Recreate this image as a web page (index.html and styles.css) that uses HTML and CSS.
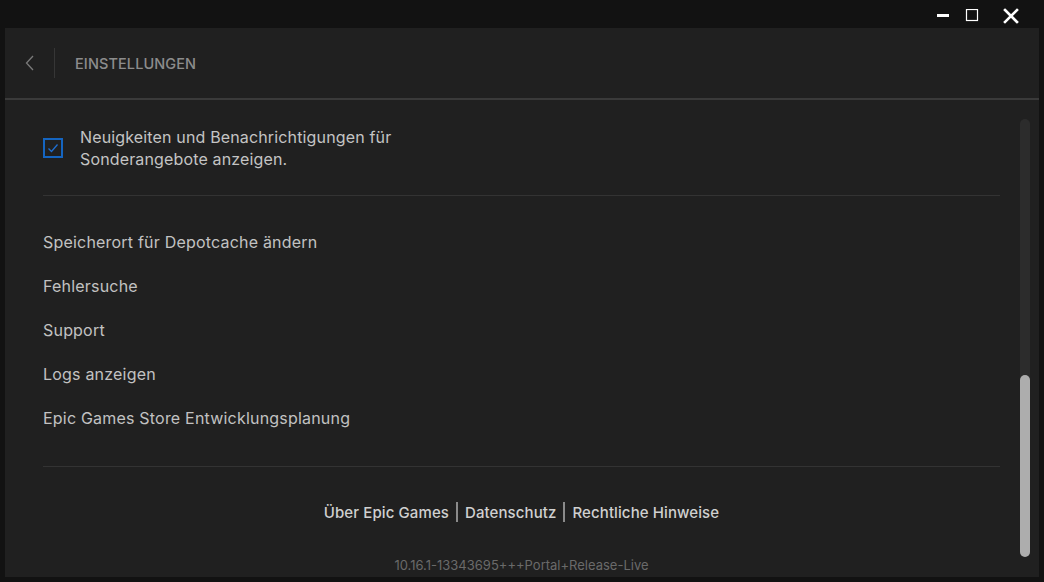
FILE: index.html
```html
<html>
<head>
    <meta charset="utf-8">
    <link rel="stylesheet" href="styles.css">
    <title>Einstellungen</title>
</head>
<body>

<!--title bar-->
<div class="titlebar">
    <span class="win-btn">
        <svg width="14" height="14" viewBox="0 0 14 14"><rect x="1" y="5" width="12" height="3" fill="#fff"/></svg>
    </span>
    <span class="win-btn">
        <svg width="14" height="14" viewBox="0 0 14 14"><rect x="1.5" y="0.5" width="11" height="11" fill="none" stroke="#fff" stroke-width="1.2"/></svg>
    </span>
    <span class="win-btn close">
        <svg width="16" height="16" viewBox="0 0 16 16"><path d="M2 2 L14 14 M14 2 L2 14" stroke="#fff" stroke-width="2.6" stroke-linecap="square"/></svg>
    </span>
</div>

<div class="panel">
    <div class="header">
        <span class="back">
            <svg width="10" height="16" viewBox="0 0 10 16"><path d="M8 1 L1.5 8 L8 15" fill="none" stroke="#7a7a7a" stroke-width="1.3"/></svg>
        </span>
        <span class="header-divider"></span>
        <span class="header-title">EINSTELLUNGEN</span>
    </div>

    <div class="body-row">
        <div class="content">
            <div class="check-row">
                <span class="checkbox">
                    <svg width="14" height="14" viewBox="0 0 14 14"><path d="M2.5 7.5 L5.5 10.5 L11.5 3.5" fill="none" stroke="#1f6fd1" stroke-width="1.3"/></svg>
                </span>
                <span class="check-label">Neuigkeiten und Benachrichtigungen für<br>Sonderangebote anzeigen.</span>
            </div>

            <hr class="sep first-sep">

            <div class="menu-item">Speicherort für Depotcache ändern</div>
            <div class="menu-item">Fehlersuche</div>
            <div class="menu-item">Support</div>
            <div class="menu-item">Logs anzeigen</div>
            <div class="menu-item">Epic Games Store Entwicklungsplanung</div>

            <hr class="sep last-sep">

            <div class="footer-links">
                <span>Über Epic Games</span>
                <span class="bar"></span>
                <span>Datenschutz</span>
                <span class="bar"></span>
                <span>Rechtliche Hinweise</span>
            </div>
            <div class="version">10.16.1-13343695+++Portal+Release-Live</div>
        </div>

        <div class="scroll-track">
            <div class="scroll-thumb"></div>
        </div>
    </div>
</div>

</body>
</html>
```

FILE: styles.css
```css
body {
    margin: 0;
    background-color: #121212;
    font-family: "Inter", "Liberation Sans", sans-serif;
    height: 582px;
    overflow: hidden;
}

/*window buttons*/
.titlebar {
    height: 28px;
    display: flex;
    justify-content: flex-end;
    align-items: center;
    padding-right: 25px;
}

.win-btn {
    display: flex;
    width: 14px;
    height: 14px;
    margin-left: 15px;
    margin-top: 4px;
}

.win-btn.close {
    width: 16px;
    height: 16px;
    margin-left: 24px;
    margin-top: 4px;
}

.panel {
    margin: 0 5px;
    height: 549px;
    background-color: #202020;
    display: flex;
    flex-direction: column;
}

.header {
    border-bottom: 2px solid #3a3a3a;
    display: flex;
    align-items: center;
    box-sizing: border-box;
    height: 72px;
}

.back {
    display: flex;
    margin-left: 20px;
    width: 10px;
}

.header-divider {
    width: 1px;
    height: 30px;
    background-color: #363636;
    margin-left: 19px;
}

.header-title {
    margin-left: 20px;
    font-size: 14.5px;
    font-weight: 500;
    color: #8c8c8c;
    letter-spacing: 0.1px;
}

.body-row {
    display: flex;
    flex: 1;
}

.content {
    width: 957px;
    margin-left: 38px;
    padding-top: 26px;
}

.check-row {
    display: flex;
    align-items: center;
}

.checkbox {
    width: 16px;
    height: 16px;
    border: 2px solid #1565c0;
    display: flex;
    align-items: center;
    justify-content: center;
}

.check-label {
    margin-left: 17px;
    font-size: 16px;
    line-height: 22px;
    letter-spacing: 0.15px;
    color: #c4c4c4;
}

.sep {
    border: none;
    height: 1px;
    background-color: #333;
    margin: 0;
}

.first-sep {
    margin-top: 25px;
    margin-bottom: 24px;
}

.menu-item {
    height: 44px;
    line-height: 44px;
    font-size: 16px;
    letter-spacing: 0.2px;
    color: #c2c2c2;
}

.last-sep {
    margin-top: 26px;
}

.footer-links {
    display: flex;
    justify-content: center;
    align-items: center;
    margin-top: 34px;
    height: 22px;
    font-size: 15px;
    font-weight: 500;
    letter-spacing: 0.1px;
    color: #d0d0d0;
}

.footer-links .bar {
    width: 2px;
    height: 20px;
    background-color: #8a8a8a;
    margin: 0 7px;
}

.version {
    text-align: center;
    margin-top: 34px;
    font-size: 13px;
    color: #6a6a6a;
}

.scroll-track {
    width: 10px;
    margin-left: 20px;
    margin-top: 19px;
    height: 438px;
    background-color: #2c2c2c;
    border-radius: 5px;
    display: flex;
    flex-direction: column;
    justify-content: flex-end;
}

.scroll-thumb {
    height: 182px;
    background-color: #adadad;
    border-radius: 5px;
}
```
